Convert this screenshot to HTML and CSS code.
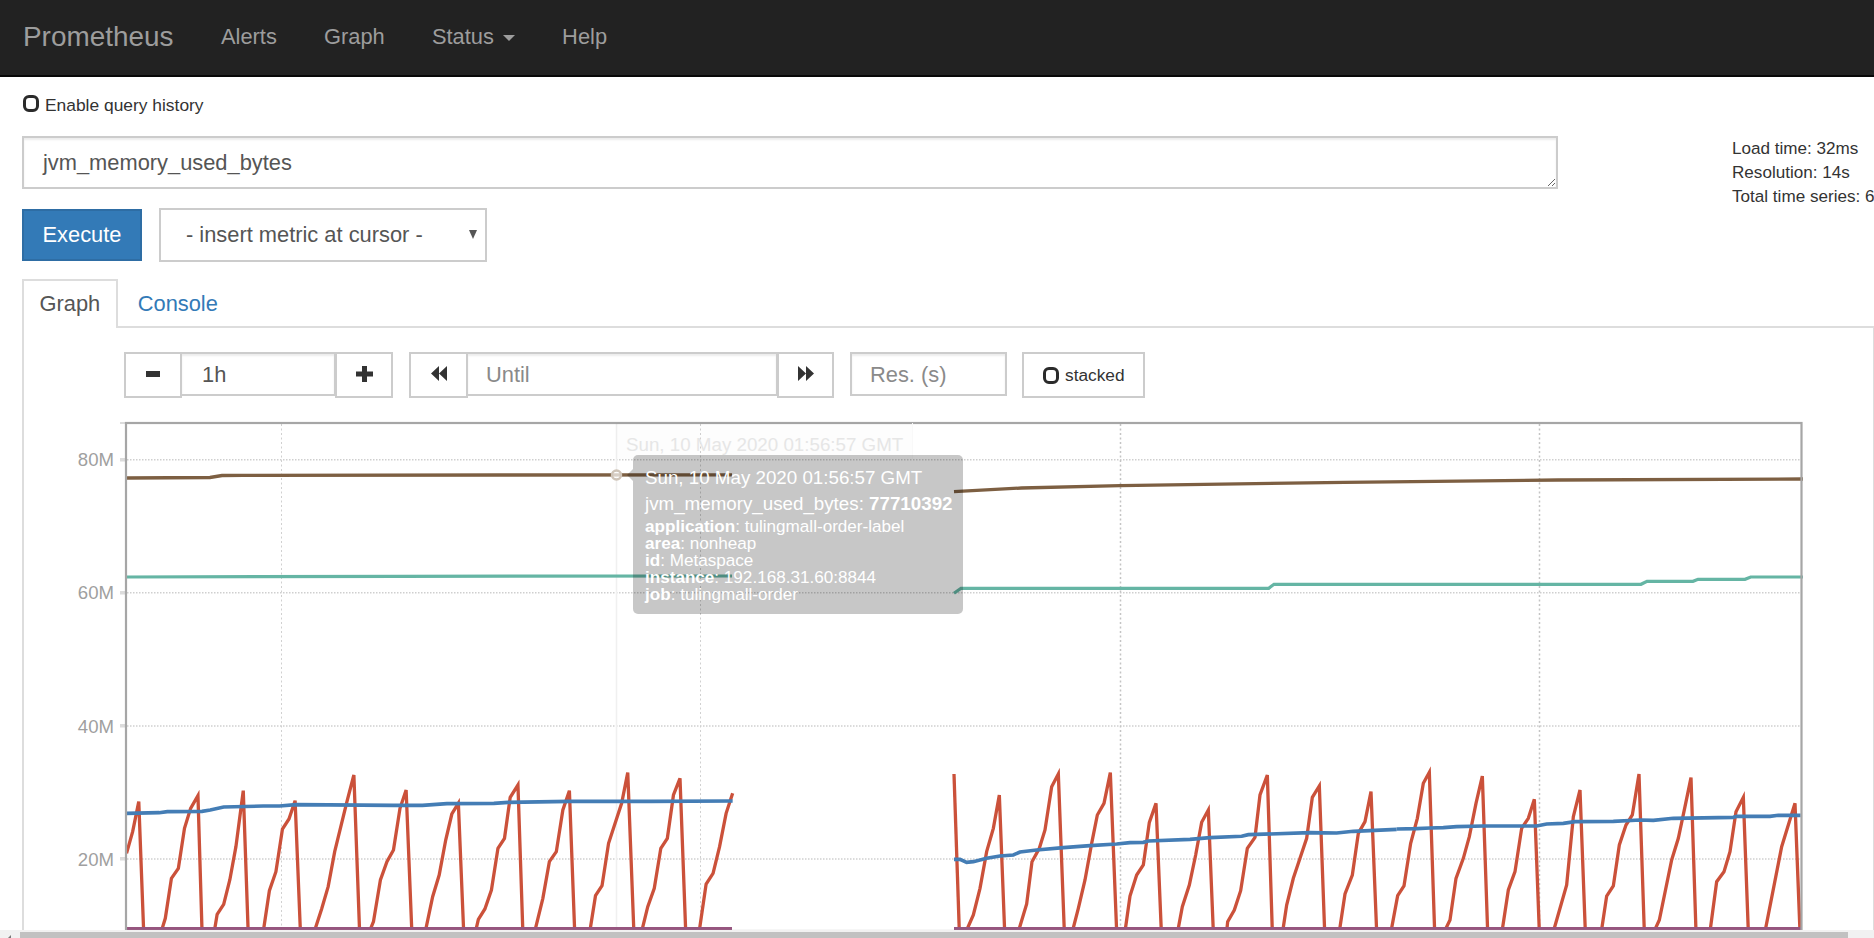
FILE: index.html
```html
<!DOCTYPE html>
<html lang="en">
<head>
<meta charset="utf-8">
<title>Prometheus Time Series Collection and Processing Server</title>
<link rel="stylesheet" href="styles.css">
</head>
<body>
<nav class="navbar">
  <a class="brand">Prometheus</a>
  <a class="nav-link">Alerts</a>
  <a class="nav-link">Graph</a>
  <a class="nav-link">Status <span class="caret"></span></a>
  <a class="nav-link">Help</a>
</nav>
<main class="page">
  <label class="history"><input type="checkbox" class="check"><span>Enable query history</span></label>
  <div class="query-row">
    <textarea class="query" spellcheck="false">jvm_memory_used_bytes</textarea>
    <div class="stats">
      <div>Load time: 32ms</div>
      <div>Resolution: 14s</div>
      <div>Total time series: 6</div>
    </div>
  </div>
  <div class="exec-row">
    <button class="execute">Execute</button>
    <div class="select-wrap">
      <select class="metric"><option>- insert metric at cursor -</option></select>
    </div>
  </div>
  <ul class="tabs">
    <li class="tab active">Graph</li>
    <li class="tab">Console</li>
  </ul>
  <section class="panel">
    <div class="toolbar">
      <div class="group">
        <button class="icon-btn"><svg width="14" height="6" viewBox="0 0 14 6"><rect width="14" height="6" fill="#333"/></svg></button>
        <input class="field range" value="1h">
        <button class="icon-btn joined"><svg width="17" height="16" viewBox="0 0 17 16"><path d="M6 0h5v5.500h6v5h-6V16H6v-5.500H0v-5h6z" fill="#333"/></svg></button>
      </div>
      <div class="group">
        <button class="icon-btn wide"><svg width="16" height="15" viewBox="0 0 16 15"><path d="M0 7.500 8 0v15zM8 7.500 16 0v15z" fill="#333"/></svg></button>
        <input class="field until" placeholder="Until">
        <button class="icon-btn joined narrow"><svg width="16" height="15" viewBox="0 0 16 15"><path d="M16 7.500 8 0v15zM8 7.500 0 0v15z" fill="#333"/></svg></button>
      </div>
      <input class="field res" placeholder="Res. (s)">
      <label class="stacked"><input type="checkbox" class="check"><span>stacked</span></label>
    </div>
    <div class="chart">
      <svg class="plot" width="1760" height="510" viewBox="60 420 1760 510">
        <g class="grid-h">
          <line x1="127" x2="1800" y1="459.700" y2="459.700"/>
          <line x1="127" x2="1800" y1="592.700" y2="592.700"/>
          <line x1="127" x2="1800" y1="726" y2="726"/>
          <line x1="127" x2="1800" y1="859" y2="859"/>
        </g>
        <g class="grid-v">
          <line class="thin" x1="281.500" x2="281.500" y1="424" y2="930"/>
          <line class="thin" x1="700.500" x2="700.500" y1="424" y2="930"/>
          <line x1="1120.500" x2="1120.500" y1="424" y2="930"/>
          <line x1="1539.500" x2="1539.500" y1="424" y2="930"/>
        </g>
        <line class="hover-line" x1="616.500" x2="616.500" y1="424" y2="930"/>
        <g class="ticks">
          <rect x="120" y="422" width="6" height="2"/>
          <rect x="120" y="458" width="6" height="3.500"/>
          <rect x="120" y="591" width="6" height="3.500"/>
          <rect x="120" y="724" width="6" height="3.500"/>
          <rect x="120" y="857" width="6" height="3.500"/>
        </g>
        <g class="ylabels">
          <text x="114" y="465.500">80M</text>
          <text x="114" y="599">60M</text>
          <text x="114" y="732.500">40M</text>
          <text x="114" y="865.500">20M</text>
        </g>

        <polyline class="s brown" points="127,478 210,477.500 222,475.500 243,475.300 500,475 732,474.800"/>
        <polyline class="s brown" points="954,491.700 1021.500,488 1120,485.700 1344.500,482.300 1558,480 1803,479"/>
        <polyline class="s teal" points="127,577 400,576.300 732,576"/>
        <polyline class="s teal" points="954,593.300 961,588.300 1268.700,588.300 1274,584.300 1641,584.300 1647,581.300 1693,581.300 1698,579.300 1745,579.300 1750.700,577 1803,577"/>

        <g transform="translate(100 760) scale(0.40816 0.33333)">
          <polyline class="s red" points="65,280 80,215 95,125 107,515"/>
          <polyline class="s red" points="150,515 160,475 175,355 192,325 207,205 222,145 240,107 250,515"/>
          <polyline class="s red" points="280,515 287,463 303,433 318,360 333,260 351,92 363,515"/>
          <polyline class="s red" points="400,515 415,392 431,335 447,207 463,177 478,122 491,515"/>
          <polyline class="s red" points="525,515 543,447 559,380 575,275 605,125 622,45 636,515"/>
          <polyline class="s red" points="660,515 670,485 687,360 703,305 719,270 735,145 750,90 764,515"/>
          <polyline class="s red" points="797,515 815,410 831,345 847,240 862,162 878,130 891,515"/>
          <polyline class="s red" points="920,515 927,478 943,447 959,390 975,265 991,235 1005,112 1024,75 1036,515"/>
          <polyline class="s red" points="1065,515 1070,490 1085,415 1101,305 1118,275 1134,150 1150,92 1163,515"/>
          <polyline class="s red" points="1200,515 1214,407 1230,377 1246,250 1278,130 1293,38 1308,515"/>
          <polyline class="s red" points="1327,515 1342,440 1358,385 1374,265 1390,235 1405,105 1421,55 1435,515"/>
          <polyline class="s red" points="1468,515 1485,372 1502,340 1518,260 1534,160 1550,100"/>
          <polyline class="s blue" points="65,160 145,158 165,155 250,154 270,150 303,141 400,138 440,138 480,134 720,136 790,136 850,131 965,130 1000,127 1150,124 1350,124 1550,123"/>
        </g>
        <g transform="translate(930 760) scale(0.33333)">
          <polyline class="s red" points="72,42 88,515"/>
          <polyline class="s red" points="108,515 130,465 150,385 170,275 190,205 208,105 224,515"/>
          <polyline class="s red" points="265,515 290,432 306,305 328,265 345,210 365,80 385,42 403,515"/>
          <polyline class="s red" points="427,515 445,445 465,360 485,250 502,165 522,130 541,38 560,515"/>
          <polyline class="s red" points="585,515 600,408 620,345 640,315 658,187 678,130 694,515"/>
          <polyline class="s red" points="743,515 757,440 778,375 797,285 815,187 835,150 850,515"/>
          <polyline class="s red" points="890,515 893,485 913,450 932,392 952,265 975,232 990,105 1012,45 1027,515"/>
          <polyline class="s red" points="1058,515 1070,435 1090,355 1110,295 1130,235 1147,112 1168,78 1184,515"/>
          <polyline class="s red" points="1228,515 1245,402 1267,345 1285,220 1305,185 1323,95 1340,515"/>
          <polyline class="s red" points="1383,515 1403,407 1422,378 1442,250 1462,175 1480,70 1498,37 1514,515"/>
          <polyline class="s blue" points="72,298 90,298 110,307 130,305 170,295 210,288 250,285 270,276 320,270 400,263 480,257 560,252 600,248 640,247 655,243 780,238 840,233 935,229 955,224 1140,218 1220,219 1270,214 1400,208"/>
        </g>
        <g transform="translate(1400 760) scale(0.33333)">
          <polyline class="s red" points="133,515 150,480 168,355 190,295 208,230 228,130 247,48 263,515"/>
          <polyline class="s red" points="306,515 325,390 345,335 365,205 385,175 403,118 418,515"/>
          <polyline class="s red" points="460,515 500,375 520,170 540,90 556,515"/>
          <polyline class="s red" points="604,515 620,408 640,378 658,255 678,195 697,165 717,42 733,515"/>
          <polyline class="s red" points="762,515 778,480 815,300 835,235 855,140 873,53 888,515"/>
          <polyline class="s red" points="930,515 950,365 972,335 990,275 1008,155 1030,112 1045,515"/>
          <polyline class="s red" points="1095,515 1145,260 1185,130 1200,515"/>
          <polyline class="s blue" points="-10,207 50,206 90,204 130,203 170,200 250,198 410,198 440,192 490,190 525,185 640,184 720,180 760,181 820,175 1000,172 1010,169 1110,169 1135,166 1202,166"/>
        </g>
        <polyline class="s purple" points="127,928.700 732,928.700"/>
        <polyline class="s purple" points="954,928.700 1801,928.700"/>

        <rect class="frame" x="126" y="423" width="1675.500" height="508"/>
        <circle class="dot" cx="616.500" cy="475" r="4.500"/>
      </svg>
      <div class="hover-date">Sun, 10 May 2020 01:56:57 GMT</div>
      <div class="tooltip">
        <div class="tip-date">Sun, 10 May 2020 01:56:57 GMT</div>
        <div class="tip-value">jvm_memory_used_bytes: <b>77710392</b></div>
        <div class="tip-labels">
          <div><b>application</b>: tulingmall-order-label</div>
          <div><b>area</b>: nonheap</div>
          <div><b>id</b>: Metaspace</div>
          <div><b>instance</b>: 192.168.31.60:8844</div>
          <div><b>job</b>: tulingmall-order</div>
        </div>
      </div>
    </div>
  </section>
</main>
<div class="scrollbar"><span class="scroll-arrow"></span><span class="scroll-thumb"></span></div>
</body>
</html>
```
FILE: styles.css
```css
* { box-sizing: border-box; }
html, body { margin: 0; height: 100%; }
body {
  width: 1874px;
  height: 938px;
  overflow: hidden;
  position: relative;
  background: #fff;
  color: #333;
  font-family: "Liberation Sans", Arial, sans-serif;
  font-size: 21.850px;
  line-height: 1.42857;
}
.navbar {
  display: flex;
  align-items: center;
  height: 77px;
  padding: 0 0 2px 23px;
  background: #222;
  border-bottom: 2px solid #080808;
  color: #9d9d9d;
}
.brand { font-size: 27.900px; line-height: 1; margin-right: 24px; }
.nav-link { padding: 0 23.600px; }
.caret {
  display: inline-block;
  margin-left: 3px;
  vertical-align: middle;
  border-top: 6px solid #9d9d9d;
  border-left: 6px solid transparent;
  border-right: 6px solid transparent;
}
.page { padding-left: 22px; width: 1874px; overflow: hidden; }
.check {
  appearance: none;
  flex: none;
  margin: 0;
  width: 16px;
  height: 17px;
  border: 3px solid #2b2b2b;
  border-radius: 6px;
  background: #fff;
}
.history {
  display: flex;
  align-items: flex-start;
  height: 59px;
  padding-top: 16px;
  font-size: 17.400px;
  line-height: 24px;
}
.history .check { margin: 2px 6px 0 1px; }
.query-row { display: flex; height: 72px; }
.query {
  flex: none;
  display: block;
  width: 1536px;
  height: 53px;
  padding: 9px 19px;
  border: 2px solid #ccc;
  border-radius: 0;
  box-shadow: inset 0 2px 2px rgba(0,0,0,.075);
  outline: 0;
  color: #555;
  font: inherit;
  line-height: 31px;
}
.stats {
  flex: none;
  margin-left: 174px;
  padding-top: 1px;
  font-size: 17.100px;
  line-height: 24px;
  white-space: nowrap;
}
.exec-row { display: flex; align-items: flex-start; height: 71px; }
.execute {
  width: 120px;
  height: 52px;
  margin-top: 1px;
  padding: 0 0 1px;
  background: #337ab7;
  border: 2px solid #2e6da4;
  color: #fff;
  font: inherit;
}
.select-wrap { position: relative; margin-left: 17px; }
.select-wrap::after {
  content: "";
  position: absolute;
  top: 22px;
  right: 10px;
  border-top: 9px solid #555;
  border-left: 4.500px solid transparent;
  border-right: 4.500px solid transparent;
}
.metric {
  appearance: none;
  display: block;
  width: 328px;
  height: 54px;
  padding: 0 25px 1px;
  background: #fff;
  border: 2px solid #ccc;
  border-radius: 0;
  color: #555;
  font: inherit;
}
.tabs {
  display: flex;
  list-style: none;
  margin: 0;
  padding: 0;
  height: 47px;
}
.tab {
  height: 49px;
  padding: 10px 16px 0 20px;
  color: #337ab7;
  line-height: 30px;
}
.tab.active {
  position: relative;
  z-index: 1;
  padding: 8px 15.500px 0;
  background: #fff;
  border: 2px solid #ddd;
  border-bottom: 0;
  color: #555;
}
.panel {
  height: 620px;
  padding: 24px 0 0 36px;
  border: 2px solid #ddd;
  border-width: 2px 1px 0 2px;
}
.toolbar {
  display: flex;
  align-items: flex-start;
  margin-left: 64px;
  height: 68px;
}
.group { display: flex; align-items: flex-start; margin-right: 16px; }
.icon-btn {
  display: flex;
  align-items: center;
  justify-content: center;
  flex: none;
  width: 58px;
  height: 46px;
  padding: 0 0 3px;
  background: #fff;
  border: 2px solid #ccc;
}
.icon-btn.joined { margin-left: -1px; }
.icon-btn.wide { width: 59px; }
.icon-btn.narrow { width: 57px; }
.field {
  display: block;
  flex: none;
  height: 44px;
  padding: 2px 18px 0;
  margin-left: -2px;
  background: #fff;
  border: 2px solid #ccc;
  border-radius: 0;
  box-shadow: inset 0 2px 2px rgba(0,0,0,.075);
  outline: 0;
  color: #555;
  font: inherit;
}
.field::placeholder { color: #8a8a8a; opacity: 1; }
.range { width: 156px; padding-left: 20px; }
.until { width: 312px; }
.res { width: 157px; margin-left: 0; }
.stacked {
  display: flex;
  align-items: center;
  gap: 6px;
  height: 46px;
  width: 123px;
  margin-left: 15px;
  padding-left: 19px;
  border: 2px solid #ccc;
  font-size: 17.300px;
}
.chart { position: relative; width: 1760px; height: 510px; }
.plot { display: block; }
.plot text { fill: #9f9f9f; font-size: 18.600px; text-anchor: end; }
.grid-h line { stroke: #cfcfcf; stroke-width: 1.600; stroke-dasharray: 1.500 1.500; }
.grid-v line { stroke: #c4c4c4; stroke-width: 1.500; stroke-dasharray: 2 2.500; }
.grid-v .thin { stroke: #d0d0d0; stroke-width: 1; }
.hover-line { stroke: #f0f0f0; stroke-width: 1.500; }
.ticks rect { fill: #dcdcdc; }
.frame { fill: none; stroke: #a6a6a6; stroke-width: 2.200; }
.s { fill: none; stroke-width: 3.300; vector-effect: non-scaling-stroke; stroke-linejoin: miter; }
.red { stroke: #cb513a; }
.blue { stroke: #447db5; stroke-width: 3.600; }
.brown { stroke: #7d5f42; stroke-width: 3.300; }
.teal { stroke: #65b5a4; stroke-width: 3.200; }
.purple { stroke: #96557f; }
.dot { fill: rgba(255,255,255,.7); stroke: #cfc4b8; stroke-width: 2.500; }
.hover-date {
  position: absolute;
  left: 556px;
  top: 3px;
  width: 297px;
  height: 36px;
  padding: 9px 0 0 10px;
  background: rgba(0,0,0,.008);
  border-right: 1px solid #f9f9f9;
  color: #e6e6e6;
  font-size: 18.750px;
  line-height: 26px;
  white-space: nowrap;
}
.tooltip {
  position: absolute;
  left: 573px;
  top: 35px;
  width: 330px;
  height: 159px;
  padding: 10px 0 0 12px;
  background: rgba(0,0,0,.22);
  border-radius: 5px;
  color: #fff;
  white-space: nowrap;
}
.tooltip::before {
  content: "";
  position: absolute;
  left: -6px;
  top: 14px;
  border-top: 6px solid transparent;
  border-bottom: 6px solid transparent;
  border-right: 6px solid rgba(0,0,0,.22);
}
.tip-date { font-size: 18.750px; line-height: 26px; }
.tip-value { font-size: 18.750px; line-height: 26px; }
.tip-labels { font-size: 17.100px; line-height: 17px; margin-top: 0.500px; }
.scrollbar {
  position: absolute;
  left: 0;
  right: 0;
  bottom: 0;
  height: 8px;
  background: #f1f1f1;
}
.scroll-thumb {
  position: absolute;
  left: 20px;
  top: 2px;
  width: 1828px;
  height: 6px;
  background: #c1c1c1;
}
.scroll-arrow {
  position: absolute;
  left: 8px;
  top: 5px;
  border-right: 3px solid #777;
  border-top: 3px solid transparent;
}
```
